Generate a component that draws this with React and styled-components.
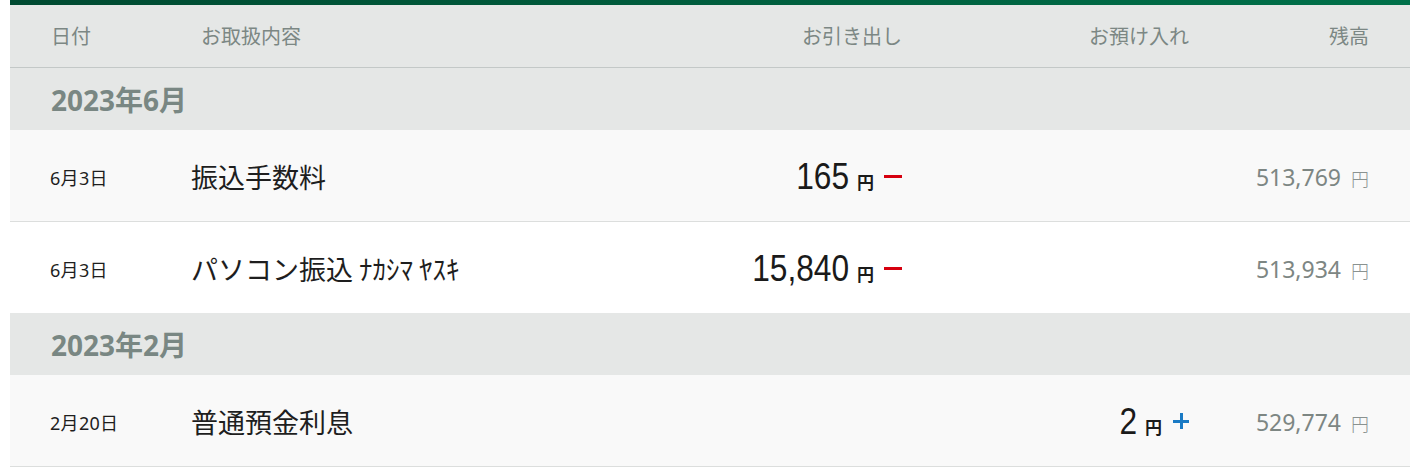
import React from 'react';
import styled, { createGlobalStyle } from 'styled-components';

const GlobalStyle = createGlobalStyle`
  body {
    margin: 0;
    background: #ffffff;
    font-family: "Noto Sans", "Noto Sans CJK JP", sans-serif;
  }
`;

const Page = styled.div`
  padding: 0 7px 0 10px;
`;

const Table = styled.div`
  width: 1400px;
  border-top: 5px solid #005a3c;
  border-image: linear-gradient(90deg, #004a31, #00714a) 1;
  border-bottom: none;
  border-left: none;
  border-right: none;
`;

const Grid = styled.div`
  display: grid;
  grid-template-columns: 140px 1fr 200px 287px 180px;
  align-items: center;
  padding: 0 41px;
`;

const HeaderRow = styled(Grid)`
  height: 62px;
  background: #e5e7e6;
  border-bottom: 1px solid #c3c8c7;
  color: #7c8784;
  font-family: "Noto Sans CJK JP", sans-serif;
  font-size: 20px;
`;

const HeadCell = styled.div`
  text-align: ${(p) => (p.$right ? 'right' : 'left')};
  padding-left: ${(p) => (p.$indent ? '10px' : '0')};
  padding-bottom: 2px;
`;

const MonthRow = styled.div`
  height: 62px;
  display: flex;
  align-items: center;
  padding: 0 41px;
  background: #e5e7e6;
  color: #798783;
  font-size: 28px;
  font-weight: 700;
  font-family: "Noto Sans", "Noto Sans CJK JP", sans-serif;
`;

const Row = styled(Grid)`
  height: 91px;
  background: ${(p) => (p.$alt ? '#f9f9f9' : '#ffffff')};
  border-bottom: ${(p) => (p.$line ? '1px solid #dcdedd' : 'none')};
`;

const DateCell = styled.div`
  font-size: 18px;
  letter-spacing: 0.3px;
  color: #1e1e1e;
  padding-top: 2px;
  margin-left: -1px;
`;

const Desc = styled.div`
  font-family: "Noto Sans CJK JP", sans-serif;
  font-size: 27px;
  color: #1e1e1e;
  padding-top: 2px;
`;

const Money = styled.div`
  display: flex;
  justify-content: flex-end;
  align-items: baseline;
  color: #1a1a1a;
`;

const Figure = styled.span`
  display: inline-block;
  font-family: "Liberation Sans", sans-serif;
  font-size: 36px;
  line-height: 1;
  transform: scaleX(0.88);
  transform-origin: right center;
  margin-top: 3px;
`;

const Yen = styled.span`
  font-family: "Noto Sans CJK JP", sans-serif;
  font-size: 17px;
  font-weight: 700;
  margin-left: 8px;
`;

const Sign = styled.span`
  display: inline-block;
  position: relative;
  width: ${(p) => (p.$plus ? '16px' : '18px')};
  height: 16px;
  margin-left: ${(p) => (p.$plus ? '11px' : '10px')};
  align-self: center;
  &::before {
    content: '';
    position: absolute;
    left: 0;
    right: 0;
    top: 7px;
    height: 3px;
    background: ${(p) => p.$color};
  }
  &::after {
    content: '';
    display: ${(p) => (p.$plus ? 'block' : 'none')};
    position: absolute;
    top: 0;
    bottom: 0;
    left: 6.5px;
    width: 3px;
    background: ${(p) => p.$color};
  }
`;

const Balance = styled.div`
  text-align: right;
  color: #7d8683;
  font-size: 23px;
  padding-top: 2px;
`;

const BalanceYen = styled.span`
  font-family: "Noto Sans CJK JP", sans-serif;
  font-size: 18px;
  font-weight: 300;
  color: #8a9290;
  margin-left: 10px;
`;

const Amount = ({ value, plus }) => (
  <Money>
    <Figure>{value}</Figure>
    <Yen>円</Yen>
    <Sign $plus={plus} $color={plus ? '#1a7ac4' : '#d6000f'} />
  </Money>
);

const groups = [
  {
    month: '2023年6月',
    rows: [
      { date: '6月3日', desc: '振込手数料', out: '165', bal: '513,769' },
      { date: '6月3日', desc: 'パソコン振込 ﾅｶｼﾏ ﾔｽｷ', out: '15,840', bal: '513,934' },
    ],
  },
  {
    month: '2023年2月',
    rows: [{ date: '2月20日', desc: '普通預金利息', in: '2', bal: '529,774' }],
  },
];

export default function App() {
  return (
    <Page>
      <GlobalStyle />
      <Table>
        <HeaderRow>
          <HeadCell>日付</HeadCell>
          <HeadCell $indent>お取扱内容</HeadCell>
          <HeadCell $right>お引き出し</HeadCell>
          <HeadCell $right>お預け入れ</HeadCell>
          <HeadCell $right>残高</HeadCell>
        </HeaderRow>
        {groups.map((g) => (
          <React.Fragment key={g.month}>
            <MonthRow>{g.month}</MonthRow>
            {g.rows.map((r, i) => (
              <Row key={i} $alt={i % 2 === 0} $line={i < g.rows.length - 1 || g === groups[groups.length - 1]}>
                <DateCell>{r.date}</DateCell>
                <Desc>{r.desc}</Desc>
                <div>{r.out && <Amount value={r.out} />}</div>
                <div>{r.in && <Amount value={r.in} plus />}</div>
                <Balance>
                  {r.bal}
                  <BalanceYen>円</BalanceYen>
                </Balance>
              </Row>
            ))}
          </React.Fragment>
        ))}
      </Table>
    </Page>
  );
}
